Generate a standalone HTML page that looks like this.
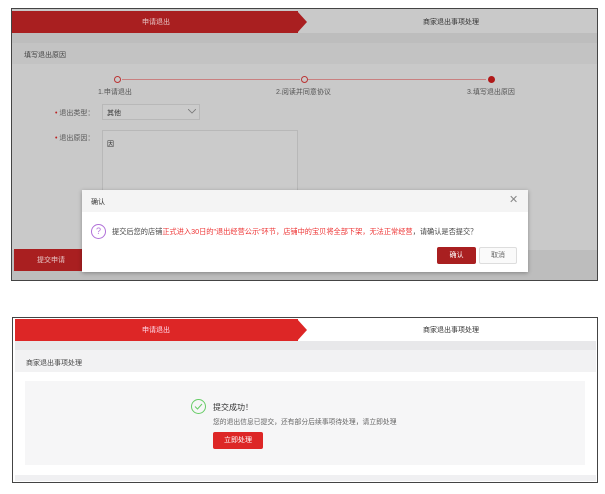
<!DOCTYPE html>
<html><head><meta charset="utf-8"><style>
*{margin:0;padding:0;box-sizing:border-box}
body{width:605px;height:494px;background:#fff;position:relative;overflow:hidden;font-family:"Liberation Sans","Noto Sans CJK SC",sans-serif;font-size:7px;color:#444}
.a{position:absolute}
.t{white-space:nowrap}
</style></head><body>
<!-- top panel (overlay dimmed) -->
<div class="a" style="left:11px;top:8px;width:587px;height:273px;border:1px solid #444;background:#c9c9c9"></div>
<div class="a" style="left:12px;top:11px;width:286px;height:22px;background:#a91f20"></div>
<svg class="a" style="left:297px;top:11px" width="12" height="22"><polygon points="0,0 10,11 0,22" fill="#a91f20"/></svg>
<div class="a t" style="left:142px;top:17px;color:#e8c8c8">申请退出</div>
<div class="a t" style="left:423px;top:17px;color:#333">商家退出事项处理</div>
<div class="a" style="left:12px;top:33px;width:585px;height:10px;background:#bdbdbd"></div>
<div class="a" style="left:12px;top:43px;width:585px;height:21px;background:#c3c3c3"></div>
<div class="a t" style="left:24px;top:50px;color:#444">填写退出原因</div>
<div class="a" style="left:122px;top:79px;width:178px;height:1px;background:#c98080"></div>
<div class="a" style="left:308px;top:79px;width:178px;height:1px;background:#c98080"></div>
<div class="a" style="left:114px;top:76px;width:7px;height:7px;border:1px solid #b33;border-radius:50%"></div>
<div class="a" style="left:301px;top:76px;width:7px;height:7px;border:1px solid #b33;border-radius:50%"></div>
<div class="a" style="left:488px;top:76px;width:7px;height:7px;background:#b01818;border-radius:50%"></div>
<div class="a t" style="left:98px;top:87px;color:#555">1.申请退出</div>
<div class="a t" style="left:276px;top:87px;color:#555">2.阅读并同意协议</div>
<div class="a t" style="left:467px;top:87px;color:#555">3.填写退出原因</div>
<div class="a t" style="left:55px;top:108px;color:#555"><span style="color:#b22">•</span> 退出类型：</div>
<div class="a" style="left:102px;top:104px;width:98px;height:16px;border:1px solid #b8b8b8;background:#cbcbcb"></div>
<div class="a t" style="left:107px;top:108px;color:#333">其他</div>
<svg class="a" style="left:188px;top:109px" width="8" height="5"><polyline points="0,0 4,4 8,0" fill="none" stroke="#777" stroke-width="0.8"/></svg>
<div class="a t" style="left:55px;top:133px;color:#555"><span style="color:#b22">•</span> 退出原因：</div>
<div class="a" style="left:102px;top:130px;width:196px;height:140px;border:1px solid #b8b8b8;background:#cbcbcb"></div>
<div class="a t" style="left:107px;top:139px;color:#333">因</div>
<div class="a" style="left:12px;top:250px;width:585px;height:30px;background:#bdbdbd"></div>
<div class="a" style="left:14px;top:249px;width:70px;height:22px;background:#a91f20"></div>
<div class="a t" style="left:37px;top:255px;color:#e8c8c8">提交申请</div>
<!-- dialog -->
<div class="a" style="left:82px;top:190px;width:446px;height:82px;background:#fff;box-shadow:0 1px 4px rgba(0,0,0,.3)"></div>
<div class="a" style="left:82px;top:190px;width:446px;height:22px;background:#f4f4f4"></div>
<div class="a t" style="left:91px;top:197px;color:#333">确认</div>
<div class="a t" style="left:509px;top:193px;color:#888;font-size:11px">✕</div>
<div class="a" style="left:91px;top:224px;width:15px;height:15px;border:1px solid #b070d8;border-radius:50%;color:#b070d8;font-size:9px;text-align:center;line-height:13px">?</div>
<div class="a t" style="left:112px;top:227px;color:#444;font-size:7.2px">提交后您的店铺<span style="color:#e33">正式进入30日的"退出经营公示"环节，店铺中的宝贝将全部下架，无法正常经营</span>，请确认是否提交？</div>
<div class="a" style="left:437px;top:247px;width:39px;height:17px;background:#a91f20;border-radius:2px;color:#fff;text-align:center;line-height:17px">确认</div>
<div class="a" style="left:479px;top:247px;width:38px;height:17px;background:#fafafa;border:1px solid #ddd;border-radius:2px;color:#666;text-align:center;line-height:15px">取消</div>
<!-- bottom panel -->
<div class="a" style="left:12px;top:317px;width:586px;height:166px;border:1px solid #444;background:#fff"></div>
<div class="a" style="left:15px;top:319px;width:283px;height:22px;background:#dd2626"></div>
<svg class="a" style="left:297px;top:319px" width="12" height="22"><polygon points="0,0 10,11 0,22" fill="#dd2626"/></svg>
<div class="a t" style="left:142px;top:325px;color:#fde">申请退出</div>
<div class="a t" style="left:423px;top:325px;color:#333">商家退出事项处理</div>
<div class="a" style="left:15px;top:341px;width:581px;height:9px;background:#e8e8ea"></div>
<div class="a" style="left:15px;top:350px;width:581px;height:22px;background:#f2f2f3"></div>
<div class="a t" style="left:26px;top:358px;color:#444">商家退出事项处理</div>
<div class="a" style="left:25px;top:381px;width:560px;height:84px;background:#f6f6f7"></div>
<div class="a" style="left:15px;top:475px;width:581px;height:6px;background:#f0f0f2"></div>
<div class="a" style="left:191px;top:399px;width:15px;height:15px;border:1px solid #6c6;border-radius:50%"></div>
<svg class="a" style="left:194px;top:403px" width="9" height="7"><polyline points="1,3.5 3.5,6 8,1" fill="none" stroke="#6c6" stroke-width="1"/></svg>
<div class="a t" style="left:213px;top:402px;color:#333;font-size:8px">提交成功！</div>
<div class="a t" style="left:213px;top:416px;color:#666;font-size:6.8px">您的退出信息已提交，还有部分后续事项待处理，请立即处理</div>
<div class="a" style="left:213px;top:432px;width:50px;height:17px;background:#dd2626;border-radius:2px;color:#fff;text-align:center;line-height:17px">立即处理</div>
</body></html>
